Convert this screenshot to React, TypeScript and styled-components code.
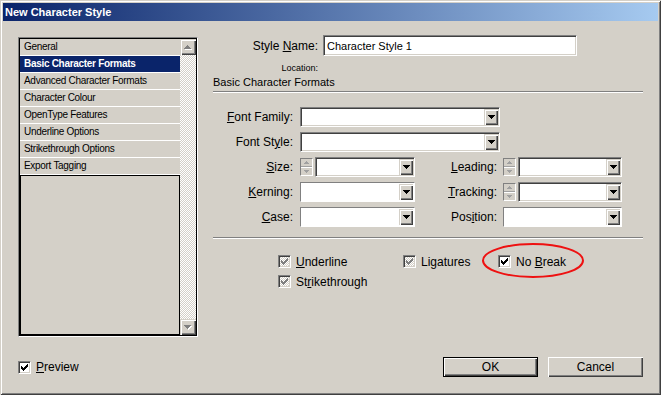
import React from 'react';
import styled, { createGlobalStyle } from 'styled-components';

const FACE = '#d4d0c8';
const FONT = '"Liberation Sans", Arial, sans-serif';
const CHECKER = `repeating-conic-gradient(#ffffff 0 25%, ${FACE} 0 50%) 0 0 / 2px 2px`;

const Global = createGlobalStyle`
  html, body { margin: 0; padding: 0; background: ${FACE}; }
  body { font-family: ${FONT}; }
  * { box-sizing: border-box; }
`;

const Window = styled.div`
  width: 661px;
  height: 395px;
  padding: 3px;
  background: ${FACE};
  box-shadow: inset 1px 1px ${FACE}, inset -1px -1px #404040, inset 2px 2px #ffffff, inset -2px -2px #808080;
  display: flex;
  flex-direction: column;
`;

const TitleBar = styled.div`
  height: 18px;
  flex: none;
  display: flex;
  align-items: center;
  padding-left: 2px;
  background: linear-gradient(to right, #0a246a, #a6caf0);
  color: #ffffff;
  font: bold 11px ${FONT};
`;

const Body = styled.div`
  flex: 1;
  display: grid;
  grid-template-columns: 180px 1fr;
  grid-template-rows: 302px 20px;
  column-gap: 15px;
  row-gap: 20px;
  padding: 14px 15px 15px 15px;
`;

/* ---------- left list ---------- */

const ListBox = styled.div`
  margin-top: 2px;
  height: 300px;
  border: 1px solid;
  border-color: #808080 #ffffff #ffffff #808080;
  box-shadow: inset 0 0 0 1px #000000;
  padding: 1px;
  display: flex;
  background: ${FACE};
`;

const Items = styled.div`
  width: 160px;
  display: flex;
  flex-direction: column;
`;

const Item = styled.div<{ $selected?: boolean }>`
  height: 17px;
  line-height: 16px;
  border-bottom: 1px solid #ffffff;
  padding-left: 4px;
  font-family: ${FONT};
  font-size: 10px;
  letter-spacing: -0.3px;
  font-weight: ${(p) => (p.$selected ? 'bold' : 'normal')};
  background: ${(p) => (p.$selected ? '#0a246a' : FACE)};
  color: ${(p) => (p.$selected ? '#ffffff' : '#000000')};
  white-space: nowrap;
  overflow: hidden;
`;

const ItemsRest = styled.div`
  flex: 1;
  border: 1px solid #000000;
`;

const ScrollBar = styled.div`
  width: 16px;
  display: flex;
  flex-direction: column;
  background: ${CHECKER};
`;

const ScrollButton = styled.div`
  width: 16px;
  height: 16px;
  flex: none;
  background: ${FACE};
  box-shadow: inset 1px 1px ${FACE}, inset 2px 2px #ffffff, inset -1px -1px #404040, inset -2px -2px #808080;
  display: flex;
  align-items: center;
  justify-content: center;
`;

const Track = styled.div`
  flex: 1;
`;

/* ---------- right panel ---------- */

const Right = styled.div`
  display: flex;
  flex-direction: column;
`;

const NameRow = styled.div`
  display: flex;
  align-items: center;
  gap: 5px;
  height: 21px;
`;

const RowLabel = styled.div<{ $w: number }>`
  width: ${(p) => p.$w}px;
  text-align: right;
  font: 12px ${FONT};
  color: #000000;
  white-space: nowrap;
`;

const TextInput = styled.div`
  width: 254px;
  height: 21px;
  background: #ffffff;
  border: 1px solid;
  border-color: #808080 #ffffff #ffffff #808080;
  box-shadow: inset 1px 1px #404040, inset -1px -1px ${FACE};
  padding: 0 3px;
  display: flex;
  align-items: center;
  font: 11px ${FONT};
  color: #000000;
`;

const Location = styled.div`
  margin-top: 7px;
  width: 105px;
  text-align: right;
  font: 9px ${FONT};
  line-height: 11px;
  color: #000000;
`;

const SectionTitle = styled.div`
  margin-top: 2px;
  font: 11px ${FONT};
  line-height: 13px;
  color: #000000;
`;

const Separator = styled.div<{ $mt: number }>`
  margin-top: ${(p) => p.$mt}px;
  height: 2px;
  border-top: 1px solid #808080;
  border-bottom: 1px solid #ffffff;
`;

const FormGrid = styled.div`
  margin-top: 14px;
  display: grid;
  grid-template-columns: 87px 115px 88px 119px;
  grid-auto-rows: 20px;
  row-gap: 5px;
`;

const FormLabel = styled.div<{ $pad: number }>`
  padding-right: ${(p) => p.$pad}px;
  text-align: right;
  font: 12px ${FONT};
  line-height: 20px;
  color: #000000;
  white-space: nowrap;
`;

const Wide = styled.div`
  grid-column: 2 / 5;
  display: flex;
  align-items: center;
`;

const Field = styled.div`
  display: flex;
  align-items: center;
  gap: 2px;
`;

const ComboBox = styled.div<{ $w?: number; $flat?: boolean }>`
  height: 20px;
  width: ${(p) => (p.$w ? `${p.$w}px` : 'auto')};
  flex: ${(p) => (p.$w ? 'none' : '1')};
  display: flex;
  align-items: center;
  justify-content: flex-end;
  background: #ffffff;
  border: 1px solid;
  border-color: #808080 #ffffff #ffffff #808080;
  box-shadow: ${(p) => (p.$flat ? 'none' : `inset 1px 1px #404040, inset -1px -1px ${FACE}`)};
  padding: 1px;
`;

const DropButton = styled.div`
  width: 14px;
  height: 16px;
  background: ${FACE};
  box-shadow: inset 1px 1px ${FACE}, inset 2px 2px #ffffff, inset -1px -1px #404040, inset -2px -2px #808080;
  display: flex;
  align-items: center;
  justify-content: center;
`;

const Spinner = styled.div`
  width: 13px;
  height: 18px;
  flex: none;
  border: 1px solid;
  border-color: #808080 #ffffff #ffffff #808080;
  display: flex;
  flex-direction: column;
  background: ${FACE};
`;

const SpinHalf = styled.div<{ $bottom?: boolean }>`
  flex: 1;
  display: flex;
  align-items: center;
  justify-content: center;
  border-top: ${(p) => (p.$bottom ? '1px solid #ffffff' : 'none')};
  box-shadow: ${(p) => (p.$bottom ? 'none' : 'inset 0 -1px #a0a0a0')};
`;

const CheckGrid = styled.div`
  margin-top: 16px;
  padding-left: 65px;
  display: grid;
  grid-template-columns: 125px 95px auto;
  grid-auto-rows: 13px;
  row-gap: 7px;
`;

const CheckItem = styled.div<{ $circled?: boolean }>`
  position: ${(p) => (p.$circled ? 'relative' : 'static')};
  display: flex;
  align-items: center;
  gap: 5px;
  font: 12px ${FONT};
  color: #000000;
  white-space: nowrap;
`;

const Box = styled.div<{ $disabled?: boolean }>`
  width: 13px;
  height: 13px;
  flex: none;
  border: 1px solid;
  border-color: #808080 #ffffff #ffffff #808080;
  box-shadow: inset 1px 1px #404040, inset -1px -1px ${FACE};
  background: ${(p) => (p.$disabled ? CHECKER : '#ffffff')};
  display: flex;
  align-items: center;
  justify-content: center;
`;

const Ellipse = styled.svg`
  position: absolute;
  left: -16px;
  top: -12px;
  pointer-events: none;
  overflow: visible;
`;

const Key = styled.span`
  text-decoration: underline;
  text-underline-offset: 1px;
`;

/* ---------- bottom ---------- */

const Footer = styled.div`
  grid-column: 1 / -1;
  display: flex;
  align-items: center;
  justify-content: space-between;
`;

const Buttons = styled.div`
  display: flex;
  gap: 10px;
`;

const Button = styled.button<{ $default?: boolean }>`
  width: 95px;
  height: 20px;
  padding: 0;
  font: 12px ${FONT};
  color: #000000;
  background: ${FACE};
  border: ${(p) => (p.$default ? '1px solid #000000' : 'none')};
  box-shadow: inset 1px 1px #ffffff, inset -1px -1px #404040, inset -2px -2px #808080;
`;

/* ---------- drawings ---------- */

const Check = ({ color = '#000000' }: { color?: string }) => (
  <svg width="7" height="7" viewBox="0 0 7 7" shapeRendering="crispEdges">
    {[2, 3, 4, 3, 2, 1, 0].map((y, x) => (
      <rect key={x} x={x} y={y} width={1} height={3} fill={color} />
    ))}
  </svg>
);

const DownArrow = ({ color = '#000000' }: { color?: string }) => (
  <svg width="7" height="4" viewBox="0 0 7 4" shapeRendering="crispEdges">
    <rect x={0} y={0} width={7} height={1} fill={color} />
    <rect x={1} y={1} width={5} height={1} fill={color} />
    <rect x={2} y={2} width={3} height={1} fill={color} />
    <rect x={3} y={3} width={1} height={1} fill={color} />
  </svg>
);

const UpArrowDisabled = () => (
  <svg width="8" height="5" viewBox="0 0 8 5" shapeRendering="crispEdges">
    <rect x={4} y={1} width={1} height={1} fill="#ffffff" />
    <rect x={3} y={2} width={3} height={1} fill="#ffffff" />
    <rect x={2} y={3} width={5} height={1} fill="#ffffff" />
    <rect x={1} y={4} width={7} height={1} fill="#ffffff" />
    <rect x={3} y={0} width={1} height={1} fill="#808080" />
    <rect x={2} y={1} width={3} height={1} fill="#808080" />
    <rect x={1} y={2} width={5} height={1} fill="#808080" />
    <rect x={0} y={3} width={7} height={1} fill="#808080" />
  </svg>
);

const DownArrowDisabled = () => (
  <svg width="8" height="5" viewBox="0 0 8 5" shapeRendering="crispEdges">
    <rect x={1} y={1} width={7} height={1} fill="#ffffff" />
    <rect x={2} y={2} width={5} height={1} fill="#ffffff" />
    <rect x={3} y={3} width={3} height={1} fill="#ffffff" />
    <rect x={4} y={4} width={1} height={1} fill="#ffffff" />
    <rect x={0} y={0} width={7} height={1} fill="#808080" />
    <rect x={1} y={1} width={5} height={1} fill="#808080" />
    <rect x={2} y={2} width={3} height={1} fill="#808080" />
    <rect x={3} y={3} width={1} height={1} fill="#808080" />
  </svg>
);

const SpinArrow = ({ up }: { up?: boolean }) => (
  <svg width="5" height="3" viewBox="0 0 5 3" shapeRendering="crispEdges">
    {up ? (
      <>
        <rect x={2} y={0} width={1} height={1} fill="#a0a0a0" />
        <rect x={1} y={1} width={3} height={1} fill="#a0a0a0" />
        <rect x={0} y={2} width={5} height={1} fill="#a0a0a0" />
      </>
    ) : (
      <>
        <rect x={0} y={0} width={5} height={1} fill="#a0a0a0" />
        <rect x={1} y={1} width={3} height={1} fill="#a0a0a0" />
        <rect x={2} y={2} width={1} height={1} fill="#a0a0a0" />
      </>
    )}
  </svg>
);

/* ---------- composites ---------- */

const Combo = ({ w, flat }: { w?: number; flat?: boolean }) => (
  <ComboBox $w={w} $flat={flat}>
    <DropButton>
      <DownArrow />
    </DropButton>
  </ComboBox>
);

const SpinCombo = () => (
  <Field>
    <Spinner>
      <SpinHalf>
        <SpinArrow up />
      </SpinHalf>
      <SpinHalf $bottom>
        <SpinArrow />
      </SpinHalf>
    </Spinner>
    <Combo />
  </Field>
);

const CheckBox = ({ disabled, checked = true }: { disabled?: boolean; checked?: boolean }) => (
  <Box $disabled={disabled}>{checked && <Check color={disabled ? '#808080' : '#000000'} />}</Box>
);

const items = [
  'General',
  'Basic Character Formats',
  'Advanced Character Formats',
  'Character Colour',
  'OpenType Features',
  'Underline Options',
  'Strikethrough Options',
  'Export Tagging',
];

export default function App() {
  return (
    <>
      <Global />
      <Window>
        <TitleBar>New Character Style</TitleBar>
        <Body>
          <ListBox>
            <Items>
              {items.map((t, i) => (
                <Item key={t} $selected={i === 1}>
                  {t}
                </Item>
              ))}
              <ItemsRest />
            </Items>
            <ScrollBar>
              <ScrollButton>
                <UpArrowDisabled />
              </ScrollButton>
              <Track />
              <ScrollButton>
                <DownArrowDisabled />
              </ScrollButton>
            </ScrollBar>
          </ListBox>

          <Right>
            <NameRow>
              <RowLabel $w={105}>
                Style <Key>N</Key>ame:
              </RowLabel>
              <TextInput>Character Style 1</TextInput>
            </NameRow>
            <Location>Location:</Location>
            <SectionTitle>Basic Character Formats</SectionTitle>
            <Separator $mt={2} />

            <FormGrid>
              <FormLabel $pad={7}>
                <Key>F</Key>ont Family:
              </FormLabel>
              <Wide>
                <Combo w={200} />
              </Wide>

              <FormLabel $pad={7}>
                Font St<Key>y</Key>le:
              </FormLabel>
              <Wide>
                <Combo w={200} />
              </Wide>

              <FormLabel $pad={7}>
                <Key>S</Key>ize:
              </FormLabel>
              <SpinCombo />
              <FormLabel $pad={6}>
                <Key>L</Key>eading:
              </FormLabel>
              <SpinCombo />

              <FormLabel $pad={7}>
                <Key>K</Key>erning:
              </FormLabel>
              <Field>
                <Combo flat />
              </Field>
              <FormLabel $pad={6}>
                <Key>T</Key>racking:
              </FormLabel>
              <SpinCombo />

              <FormLabel $pad={7}>
                <Key>C</Key>ase:
              </FormLabel>
              <Field>
                <Combo flat />
              </Field>
              <FormLabel $pad={6}>
                Pos<Key>i</Key>tion:
              </FormLabel>
              <Field>
                <Combo flat />
              </Field>
            </FormGrid>

            <Separator $mt={10} />

            <CheckGrid>
              <CheckItem>
                <CheckBox disabled />
                <span>
                  <Key>U</Key>nderline
                </span>
              </CheckItem>
              <CheckItem>
                <CheckBox disabled />
                <span>
                  Li<Key>g</Key>atures
                </span>
              </CheckItem>
              <CheckItem $circled>
                <CheckBox />
                <span>
                  No <Key>B</Key>reak
                </span>
                <Ellipse width="102" height="35" viewBox="0 0 102 35">
                  <ellipse cx="51" cy="17.5" rx="50" ry="16.5" fill="none" stroke="#ee1111" strokeWidth="2" />
                </Ellipse>
              </CheckItem>
              <CheckItem>
                <CheckBox disabled />
                <span>
                  St<Key>r</Key>ikethrough
                </span>
              </CheckItem>
            </CheckGrid>
          </Right>

          <Footer>
            <CheckItem>
              <CheckBox />
              <span>
                <Key>P</Key>review
              </span>
            </CheckItem>
            <Buttons>
              <Button $default>OK</Button>
              <Button>Cancel</Button>
            </Buttons>
          </Footer>
        </Body>
      </Window>
    </>
  );
}
